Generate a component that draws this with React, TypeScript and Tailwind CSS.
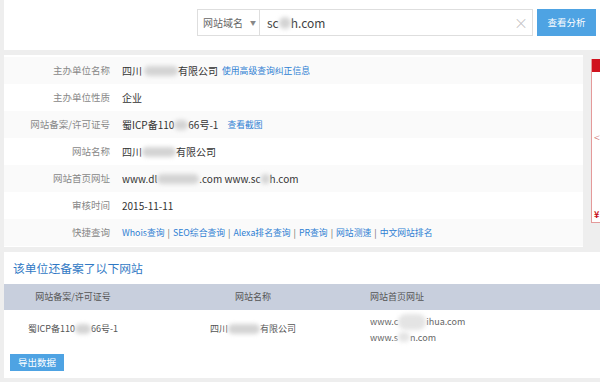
import React from "react";

const F = "font-['Noto_Sans_CJK_SC','Noto_Sans',sans-serif]";

function Blur({ w, className = "" }: { w: number; className?: string }) {
  return (
    <span
      className={`inline-block h-[10px] rounded-full bg-[#d4d4d4] blur-[2px] align-middle ${className}`}
      style={{ width: w }}
    />
  );
}

function Row({ label, children, stripe }: { label: string; children: React.ReactNode; stripe?: boolean }) {
  return (
    <div className={`flex h-[27px] items-center ${stripe ? "bg-[#fafafa]" : "bg-white"}`}>
      <div className="w-[106px] shrink-0 text-right text-[9.5px] text-[#888]">{label}</div>
      <div className="ml-[12px] flex items-center text-[10px] text-[#333] whitespace-nowrap">{children}</div>
    </div>
  );
}

const link = "text-[#2f7fd3]";
const sep = <span className="mx-[3px] text-[#666]">|</span>;

export default function App() {
  return (
    <div className={`w-[600px] h-[382px] overflow-hidden bg-[#eeeeee] pl-[4px] ${F}`}>
      {/* top search panel */}
      <div className="h-[50px] bg-white flex items-start pt-[9px] pl-[193px]">
        <div className="flex h-[27px] w-[336px] border border-[#dedede]">
          <div className="flex w-[62px] items-center border-r border-[#dedede] pl-[5px] text-[10px] text-[#666]">
            <span>网站域名</span>
            <span className="ml-[7px] text-[6px] text-[#888]">▼</span>
          </div>
          <div className="flex flex-1 items-center pl-[7px] pr-[4px] text-[12px] text-[#444]">
            <span>sc</span>
            <Blur w={12} className="h-[12px] bg-[#cfcfcf]" />
            <span>h.com</span>
            <span className="ml-auto text-[14px] font-light text-[#bbb]">×</span>
          </div>
        </div>
        <div className="ml-[4px] flex h-[27px] w-[59px] items-center justify-center bg-[#4ea3e3] text-[9.5px] text-white">
          查看分析
        </div>
      </div>

      {/* info section */}
      <div className="mt-[5px] flex h-[192px]">
        <div className="w-[579px] bg-white pt-[2px]">
          <Row label="主办单位名称" stripe>
            <span>四川</span>
            <Blur w={34} className="ml-[2px]" />
            <span>有限公司</span>
            <span className={`ml-[4px] text-[8.8px] ${link}`}>使用高级查询纠正信息</span>
          </Row>
          <Row label="主办单位性质">
            <span>企业</span>
          </Row>
          <Row label="网站备案/许可证号" stripe>
            <span>蜀ICP备110</span>
            <Blur w={14} />
            <span>66号-1</span>
            <span className={`ml-[9px] text-[8.8px] ${link}`}>查看截图</span>
          </Row>
          <Row label="网站名称">
            <span>四川</span>
            <Blur w={34} />
            <span>有限公司</span>
          </Row>
          <Row label="网站首页网址" stripe>
            <span>www.dl</span>
            <Blur w={42} />
            <span>.com www.sc</span>
            <Blur w={9} />
            <span>h.com</span>
          </Row>
          <Row label="审核时间">
            <span>2015-11-11</span>
          </Row>
          <Row label="快捷查询" stripe>
            <span className={`text-[8.8px] ${link}`}>
              Whois查询{sep}SEO综合查询{sep}Alexa排名查询{sep}PR查询{sep}网站测速{sep}中文网站排名
            </span>
          </Row>
        </div>
        <div className="ml-[8px] mt-[4px] flex h-[164px] flex-1 flex-col border-l border-b border-[#e49a9a] bg-white">
          <div className="h-[13px] bg-[#d0121e]" />
          <div className="flex flex-1 flex-col items-start pl-[2px]">
            <span className="mt-[60px] text-[11px] font-light leading-none text-[#c66]">&lt;</span>
            <span className="mt-auto mb-[3px] text-[9px] font-bold leading-none text-[#c8101a]">¥</span>
          </div>
        </div>
      </div>

      {/* second panel */}
      <div className="mt-[5px] h-[126px] bg-white">
        <div className="flex h-[32px] items-center pl-[9px] text-[11.8px] text-[#2f78c4]">该单位还备案了以下网站</div>
        <div className="grid h-[26px] grid-cols-[138px_222px_1fr] items-center bg-[#c8cfdd] text-[9px] text-[#555]">
          <div className="text-center">网站备案/许可证号</div>
          <div className="text-center">网站名称</div>
          <div className="pl-[6px]">网站首页网址</div>
        </div>
        <div className="grid h-[38px] grid-cols-[138px_222px_1fr] items-center text-[9px] text-[#555]">
          <div className="flex items-center justify-center whitespace-nowrap">
            <span>蜀ICP备110</span>
            <Blur w={16} />
            <span>66号-1</span>
          </div>
          <div className="flex items-center justify-center whitespace-nowrap">
            <span>四川</span>
            <Blur w={32} />
            <span>有限公司</span>
          </div>
          <div className="flex flex-col pl-[6px] text-[#666] leading-[15px]">
            <div className="flex items-center">
              <span>www.c</span>
              <Blur w={28} className="h-[16px] bg-[#e4e4e4]" />
              <span>ihua.com</span>
            </div>
            <div className="flex items-center">
              <span>www.s</span>
              <Blur w={12} className="bg-[#e4e4e4]" />
              <span>n.com</span>
            </div>
          </div>
        </div>
        <div className="ml-[6px] mt-[6px] flex h-[17px] w-[54px] items-center justify-center bg-[#4ea3e3] text-[9.5px] text-white">
          导出数据
        </div>
      </div>
    </div>
  );
}
